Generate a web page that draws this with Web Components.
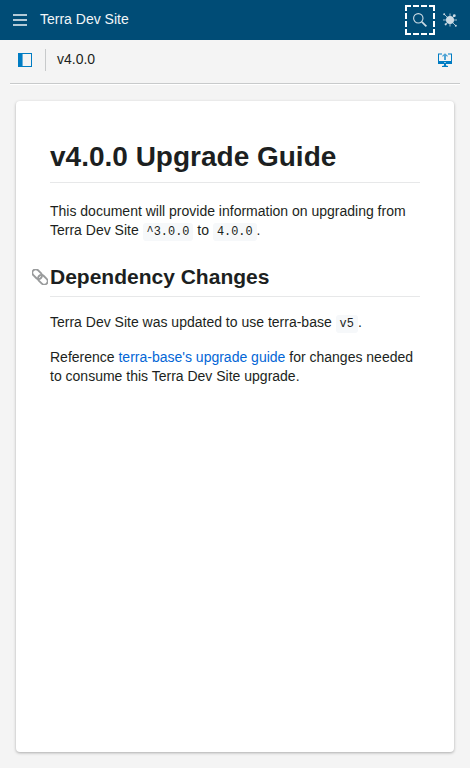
<!DOCTYPE html>
<html lang="en">
<head>
<meta charset="utf-8">
<title>Terra Dev Site</title>
<style>
html,body{margin:0;height:100%;overflow:hidden}
body{font:14px/19px "Liberation Sans",Arial,sans-serif;color:#1c1f21;background:#f4f4f4}
</style>
</head>
<body>
<dev-site></dev-site>
<script>
const define = (name, html) => customElements.define(name, class extends HTMLElement {
  constructor() {
    super();
    this.attachShadow({ mode: 'open' }).innerHTML = html;
  }
});

define('site-header', `
<style>
:host{display:flex;align-items:center;height:40px;box-sizing:border-box;padding:0 5px 0 13px;background:#004c76;color:#fff;flex:none}
svg{display:block}
.title{margin-left:13px;flex:1;padding-bottom:2px;color:#f2f6f8}
.tool{width:30px;height:30px;display:grid;place-items:center;box-sizing:border-box}
.focus{border:2px dashed #fff}
</style>
<svg width="14" height="14" viewBox="0 0 14 14" fill="#b2c9d6"><path d="M0 1h14v2H0zM0 6h14v2H0zM0 11h14v2H0z"/></svg>
<div class="title"><slot></slot></div>
<div class="tool focus"><svg width="14" height="14" viewBox="0 0 14 14" fill="none" stroke="#ccdbe4"><circle cx="5.3" cy="5.3" r="4.700" stroke-width="1.1"/><path d="M8.800 8.800l4.600 4.600" stroke-width="1.700"/></svg></div>
<div class="tool"><svg width="14" height="14" viewBox="0 0 14 14" fill="#ccdbe4"><circle cx="7" cy="7" r="4"/><path d="M7 .5v13M0 7h14M1 1l12 12M2.700 11.300l8.600-8.600" stroke="#ccdbe4" stroke-width=".8"/><circle cx="1.200" cy="1.200" r="1"/><circle cx="12.800" cy="12.800" r="1"/><circle cx="11.300" cy="2.700" r="1.400"/><circle cx="2.700" cy="11.300" r="1.100"/></svg></div>`);

define('page-bar', `
<style>
:host{display:flex;align-items:center;height:44px;box-sizing:border-box;margin:0 10px;padding:0 8px 4px;border-bottom:1px solid #c8cacb;box-shadow:0 1px #fff;flex:none}
svg{display:block}
.rule{width:1px;height:22px;margin:0 11px 0 13px;background:#c8cacb}
.title{flex:1}
</style>
<svg width="14" height="14" viewBox="0 0 14 14"><path fill="#007cc3" d="M0 0h14v14H0zM5 1v12h8V1z" fill-rule="evenodd"/><path fill="#66b0db" d="M4 1h1v12H4z"/></svg>
<div class="rule"></div>
<div class="title"><slot></slot></div>
<svg width="14" height="14" viewBox="0 0 14 14" fill="#007cc3"><path d="M0 .5h4v1H1V8h12V1.500h-3v-1h4V11H0zM6 11h2v1.500l2 .5v1H4v-1l2-.5z"/><path fill="#4da3d5" d="M6 2h2v5H6zM7 .3l3 2.700-.8.800L7 1.900 4.800 3.800 4 3z"/><path fill="#99cbe7" d="M6 9h2v1H6z"/></svg>`);

define('doc-card', `
<style>
:host{display:block;flex:1;margin:17px 16px 16px;padding:38px 34px 0;background:#fff;border-radius:4px;box-shadow:0 1px 3px rgba(0,0,0,.3)}
</style><slot></slot>`);

define('doc-heading', `
<style>
:host{display:block;position:relative;border-bottom:1px solid #e7e8e9;font-weight:700}
:host([level="1"]){font-size:28px;line-height:35px;padding-bottom:8px;margin-bottom:19px}
:host([level="2"]){font-size:21px;line-height:26px;padding-bottom:6px;margin:24px 0 16px}
svg{display:none;position:absolute;left:-18px;top:5px}
:host([level="2"]) svg{display:block}
</style>
<svg width="16" height="16" viewBox="0 0 16 16" fill="none" stroke="#999b9c" stroke-width="1.900"><g transform="rotate(45 8 8)"><rect x="-1.400" y="4.600" width="10.800" height="6.800" rx="3.400"/><rect x="6.600" y="4.600" width="10.800" height="6.800" rx="3.400"/></g></svg>
<slot></slot>`);

define('doc-text', `<style>:host{display:block;margin:0 0 16px}</style><slot></slot>`);
define('doc-code', `<style>:host{display:inline;font:11.9px/1 "Liberation Mono",monospace;padding:.2em 4px;background:#f6f8fa;border-radius:3px;margin:0}</style><slot></slot>`);
define('doc-link', `<style>a{color:#0366d6;text-decoration:none}</style><a href="#"><slot></slot></a>`);

define('dev-site', `
<style>:host{display:flex;flex-direction:column;height:100vh}</style>
<site-header>Terra Dev Site</site-header>
<page-bar>v4.0.0</page-bar>
<doc-card>
<doc-heading level="1">v4.0.0 Upgrade Guide</doc-heading>
<doc-text>This document will provide information on upgrading from Terra Dev Site <doc-code>^3.0.0</doc-code> to <doc-code>4.0.0</doc-code>.</doc-text>
<doc-heading level="2">Dependency Changes</doc-heading>
<doc-text>Terra Dev Site was updated to use terra-base <doc-code>v5</doc-code>.</doc-text>
<doc-text>Reference <doc-link>terra-base's upgrade guide</doc-link> for changes needed to consume this Terra Dev Site upgrade.</doc-text>
</doc-card>`);
</script>
</body>
</html>
